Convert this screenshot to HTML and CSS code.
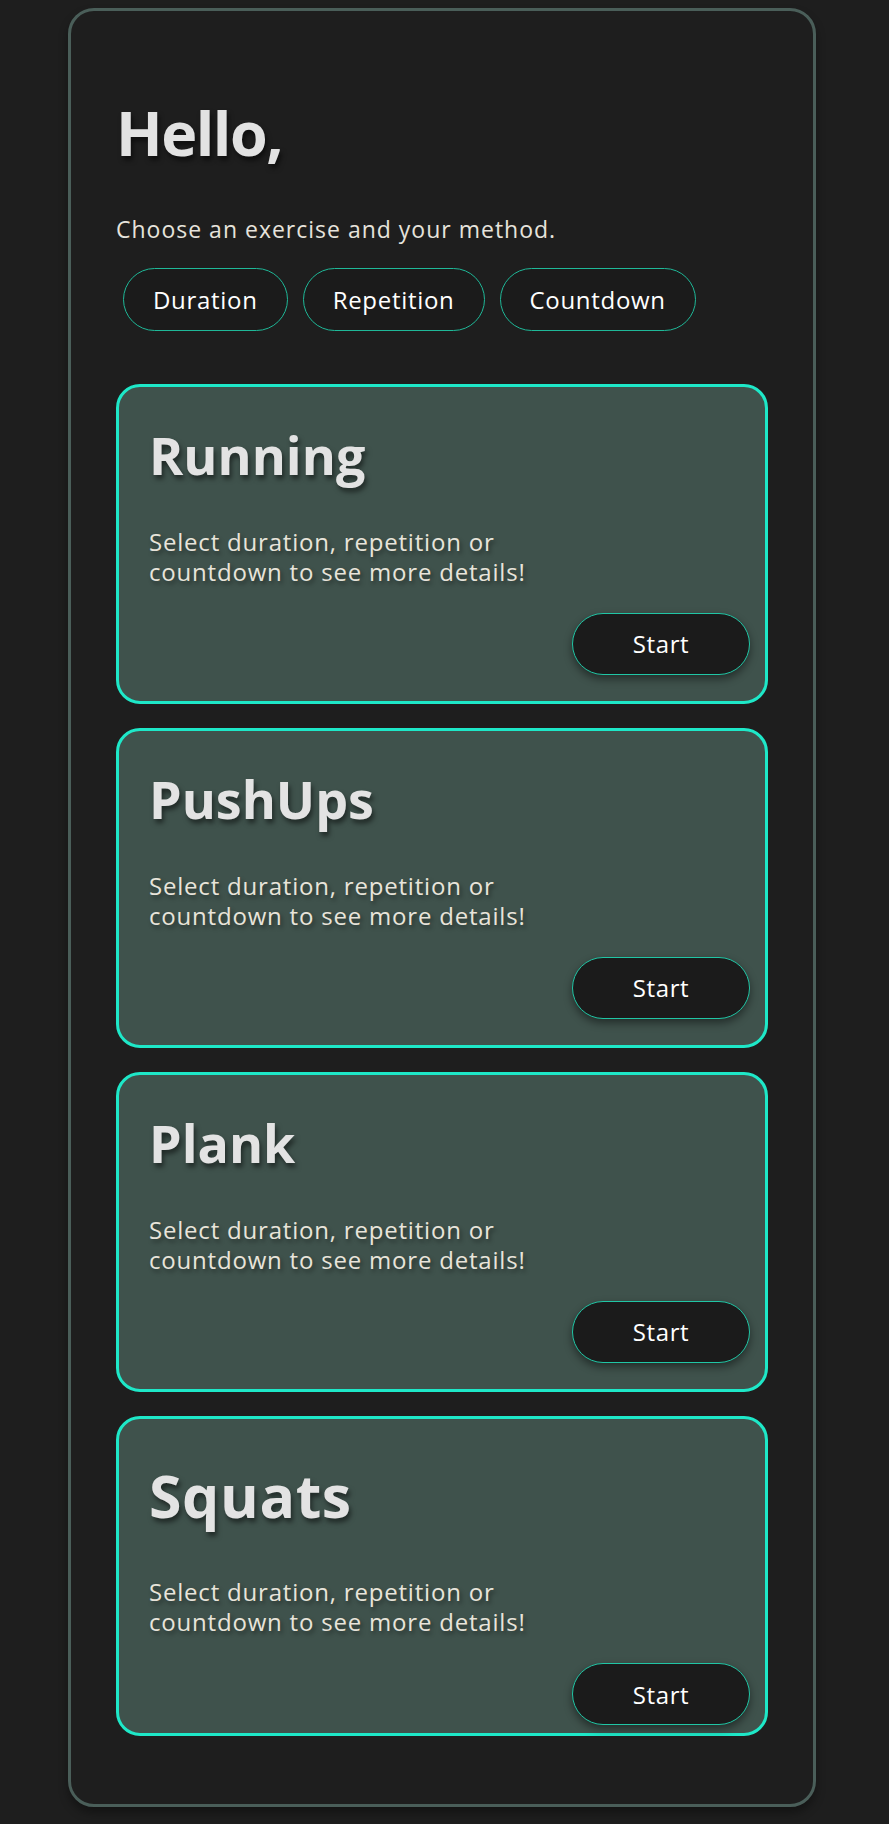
FILE: index.html
```html
<!DOCTYPE html>
<html lang="en">
<head>
<meta charset="utf-8">
<title>Exercises</title>
<link rel="stylesheet" href="styles.css">
</head>
<body>
<main class="panel">
  <h1 class="greeting">Hello,</h1>
  <p class="intro">Choose an exercise and your method.</p>
  <div class="methods">
    <button class="pill">Duration</button>
    <button class="pill">Repetition</button>
    <button class="pill">Countdown</button>
  </div>
  <section class="cards">
    <article class="card">
      <h2 class="card-title">Running</h2>
      <p class="card-text">Select duration, repetition or countdown to see more details!</p>
      <div class="card-actions"><button class="start">Start</button></div>
    </article>
    <article class="card">
      <h2 class="card-title">PushUps</h2>
      <p class="card-text">Select duration, repetition or countdown to see more details!</p>
      <div class="card-actions"><button class="start">Start</button></div>
    </article>
    <article class="card">
      <h2 class="card-title">Plank</h2>
      <p class="card-text">Select duration, repetition or countdown to see more details!</p>
      <div class="card-actions"><button class="start">Start</button></div>
    </article>
    <article class="card">
      <h2 class="card-title card-title--big">Squats</h2>
      <p class="card-text">Select duration, repetition or countdown to see more details!</p>
      <div class="card-actions"><button class="start">Start</button></div>
    </article>
  </section>
</main>
</body>
</html>
```
FILE: styles.css
```css
* { box-sizing: border-box; }

html, body {
  margin: 0;
  padding: 0;
  background: #1e1e1e;
}

body {
  font-family: "Open Sans", "Noto Sans", sans-serif;
  color: #e6e3dc;
  padding: 8px 0 18px 68px;
}

.panel {
  width: 748px;
  border: 3px solid #4a5e59;
  border-radius: 26px;
  background: #1e1e1e;
  padding: 85px 45px 68px;
  box-shadow: 0 6px 10px rgba(0, 0, 0, 0.35);
}

.greeting {
  margin: 0;
  font-size: 61px;
  line-height: 1.2;
  font-weight: 700;
  color: #e2e2e2;
  letter-spacing: -1.5px;
  text-shadow: 2px 4px 5px rgba(0, 0, 0, 0.55);
}

.intro {
  margin: 44px 0 0;
  font-size: 23px;
  line-height: 1.4;
  letter-spacing: 1px;
  color: #e6e3dc;
}

.methods {
  display: flex;
  gap: 15px;
  margin-top: 23px;
  padding-left: 7px;
}

.pill {
  height: 63px;
  padding: 0 29px;
  border: 1px solid #1fb898;
  border-radius: 32px;
  background: #1b1b1b;
  color: #ffffff;
  font-family: inherit;
  font-size: 24px;
  letter-spacing: 0.7px;
  font-weight: 500;
}

.cards {
  display: flex;
  flex-direction: column;
  gap: 24px;
  margin-top: 53px;
}

.card {
  height: 320px;
  border: 3px solid #1ee8c8;
  border-radius: 24px;
  background: #3f524c;
  padding: 37px 15px 0 30px;
  display: flex;
  flex-direction: column;
}

.card-title {
  margin: 0;
  font-size: 52px;
  line-height: 1.2;
  font-weight: 700;
  color: #e3e3e3;
  letter-spacing: 0;
  text-shadow: 2px 4px 5px rgba(0, 0, 0, 0.5);
}

.card-title--big {
  font-size: 59px;
  letter-spacing: 0.6px;
  margin-top: 4px;
}

.card-text {
  margin: 40px 0 0;
  max-width: 400px;
  font-size: 24px;
  line-height: 30px;
  letter-spacing: 0.8px;
  color: #e8e4da;
  text-shadow: 2px 3px 4px rgba(0, 0, 0, 0.4);
}

.card-title--big + .card-text {
  margin-top: 46px;
}

.card-actions {
  display: flex;
  justify-content: flex-end;
  margin-top: 26px;
}

.start {
  width: 178px;
  height: 62px;
  border: 1px solid #20c6a5;
  border-radius: 31px;
  background: #1b1b1b;
  color: #ffffff;
  font-family: inherit;
  font-size: 24px;
  letter-spacing: 0.6px;
  font-weight: 500;
  box-shadow: 0 4px 8px rgba(0, 0, 0, 0.45);
}
```
